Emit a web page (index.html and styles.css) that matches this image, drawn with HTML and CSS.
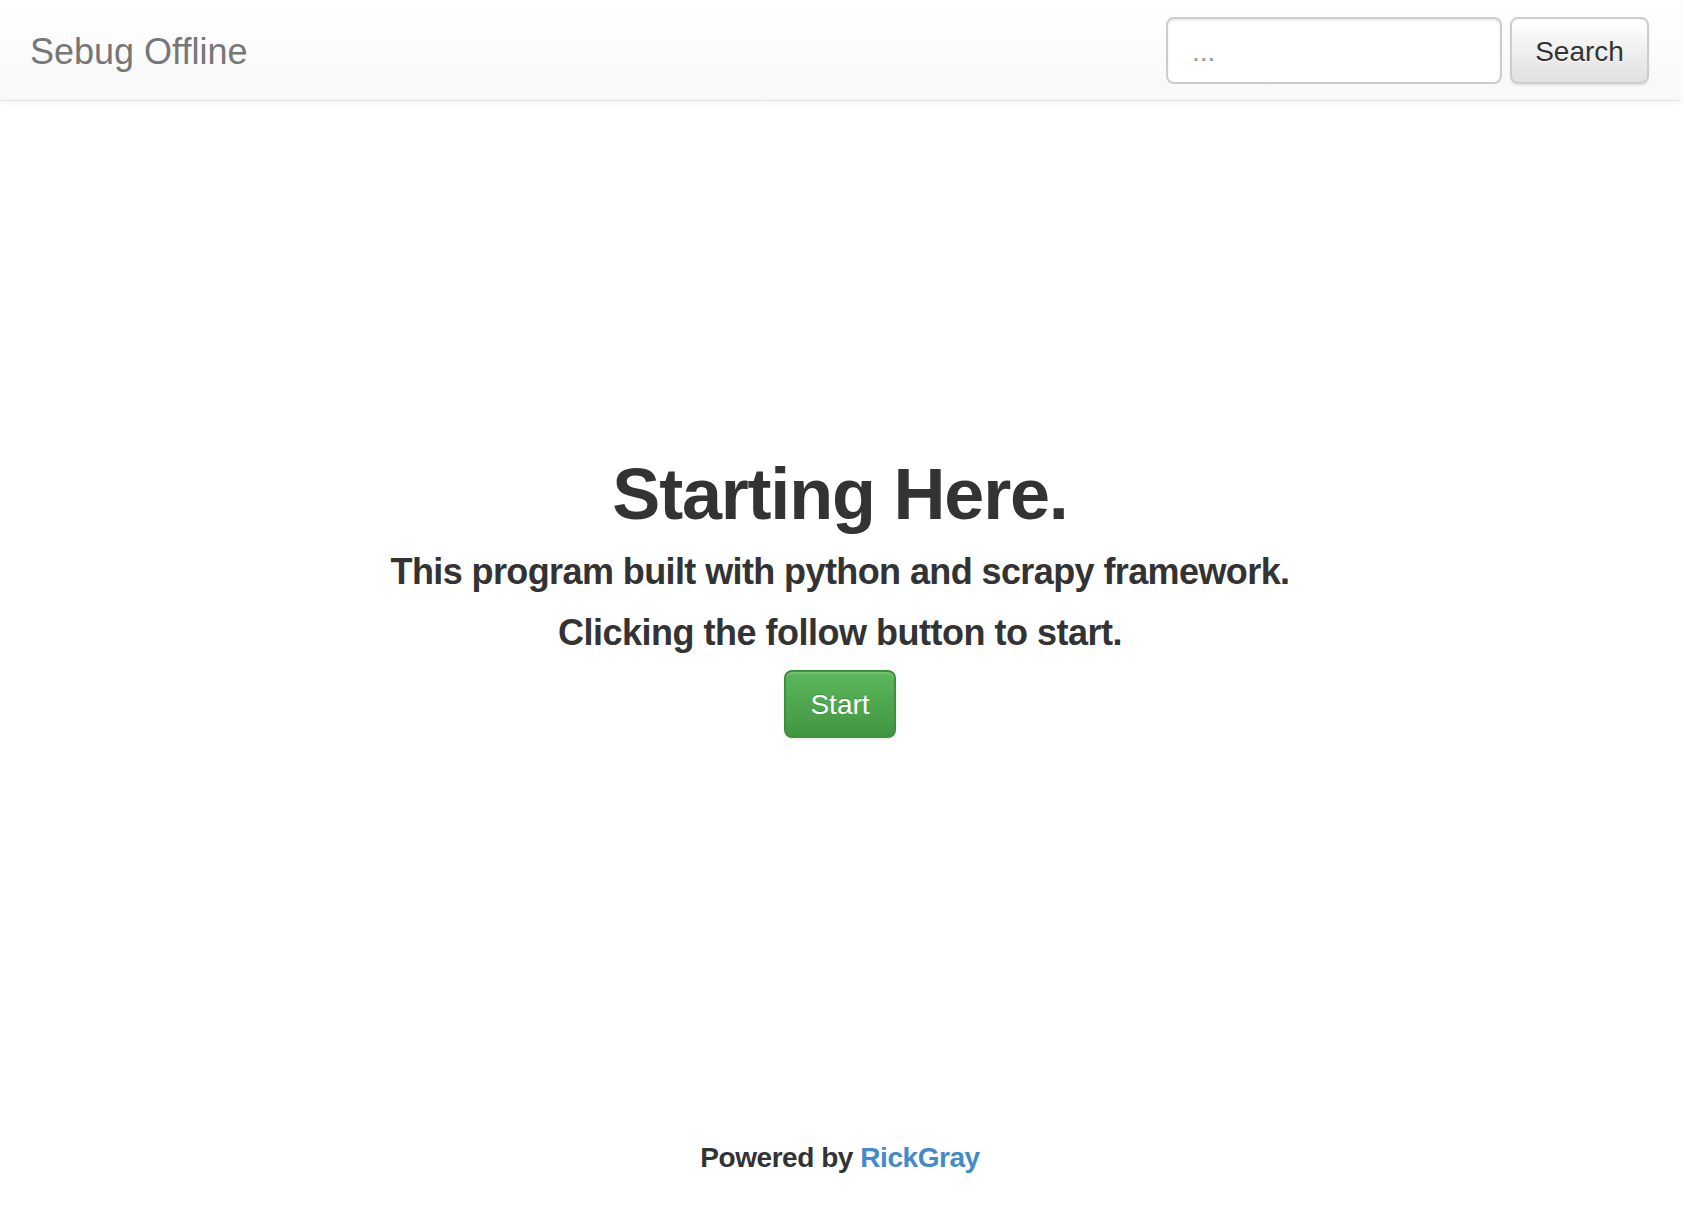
FILE: index.html
```html
<!DOCTYPE html>
<html lang="en">
<head>
<meta charset="utf-8">
<title>Sebug Offline</title>
<link rel="stylesheet" href="styles.css">
</head>
<body>
<div class="page">
  <nav class="navbar">
    <a class="brand" href="#">Sebug Offline</a>
    <form class="search">
      <input class="search-input" type="text" placeholder="...">
      <button class="btn btn-default" type="button">Search</button>
    </form>
  </nav>
  <main class="hero">
    <h1 class="hero-title">Starting Here.</h1>
    <p class="hero-text first">This program built with python and scrapy framework.</p>
    <p class="hero-text second">Clicking the follow button to start.</p>
    <a class="btn btn-success" href="#">Start</a>
  </main>
  <footer class="footer">Powered by <a class="footer-link" href="#">RickGray</a></footer>
</div>
</body>
</html>
```
FILE: styles.css
```css
html, body {
  margin: 0;
  padding: 0;
  background: #fff;
}
body {
  font-family: "Liberation Sans", Arial, sans-serif;
  color: #333;
}
.page {
  width: 1680px;
}
.navbar {
  height: 101px;
  border-bottom: 1px solid #e2e2e2;
  background: linear-gradient(to bottom, #ffffff 0%, #f8f8f8 100%);
  box-shadow: 0 2px 6px rgba(0, 0, 0, 0.05);
  display: flex;
  align-items: center;
  justify-content: space-between;
  padding: 0 31px 0 30px;
  box-sizing: border-box;
}
.brand {
  font-size: 36px;
  line-height: 40px;
  color: #777;
  text-decoration: none;
  margin-top: 4px;
}
.search {
  display: flex;
  gap: 8px;
  margin: 0;
}
.search-input {
  width: 336px;
  height: 67px;
  box-sizing: border-box;
  border: 2px solid #ccc;
  border-radius: 8px;
  padding: 3px 24px 0;
  font-family: "Liberation Sans", Arial, sans-serif;
  font-size: 28px;
  color: #555;
  background: #fff;
  box-shadow: inset 0 2px 2px rgba(0, 0, 0, 0.075);
  outline: none;
}
.search-input::placeholder {
  color: #999;
}
.btn {
  display: inline-block;
  box-sizing: border-box;
  font-family: "Liberation Sans", Arial, sans-serif;
  font-size: 28px;
  line-height: 40px;
  padding: 12px 24px;
  border-radius: 8px;
  text-decoration: none;
  cursor: pointer;
}
.btn-default {
  height: 67px;
  width: 139px;
  padding: 3px 0 0;
  color: #333;
  border: 2px solid #ccc;
  background: linear-gradient(to bottom, #ffffff 0%, #e0e0e0 100%);
  text-shadow: 0 1px 0 #fff;
  box-shadow: inset 0 2px 0 rgba(255, 255, 255, 0.15), 0 2px 2px rgba(0, 0, 0, 0.075);
}
.hero {
  display: flex;
  flex-direction: column;
  align-items: center;
  text-align: center;
}
.hero-title {
  margin: 353px 0 0;
  font-size: 72px;
  line-height: 80px;
  font-weight: 700;
  letter-spacing: -1.2px;
  color: #333;
}
.hero-text {
  margin: 0;
  font-size: 36px;
  line-height: 40px;
  font-weight: 700;
  color: #333;
}
.hero-text.first {
  margin-top: 18px;
  letter-spacing: -0.6px;
}
.hero-text.second {
  margin-top: 21px;
  letter-spacing: -0.5px;
}
.btn-success {
  margin-top: 17px;
  height: 68px;
  width: 112px;
  padding: 13px 0 11px;
  color: #fff;
  border: 2px solid #3e8f3e;
  background: linear-gradient(to bottom, #5cb85c 0%, #419641 100%);
  text-shadow: 0 -1px 0 rgba(0, 0, 0, 0.2);
  box-shadow: inset 0 2px 0 rgba(255, 255, 255, 0.15), 0 2px 2px rgba(0, 0, 0, 0.075);
}
.footer {
  margin-top: 400px;
  text-align: center;
  font-size: 28px;
  line-height: 40px;
  font-weight: 700;
  letter-spacing: -0.45px;
  color: #333;
}
.footer-link {
  color: #428bca;
  text-decoration: none;
}
```
